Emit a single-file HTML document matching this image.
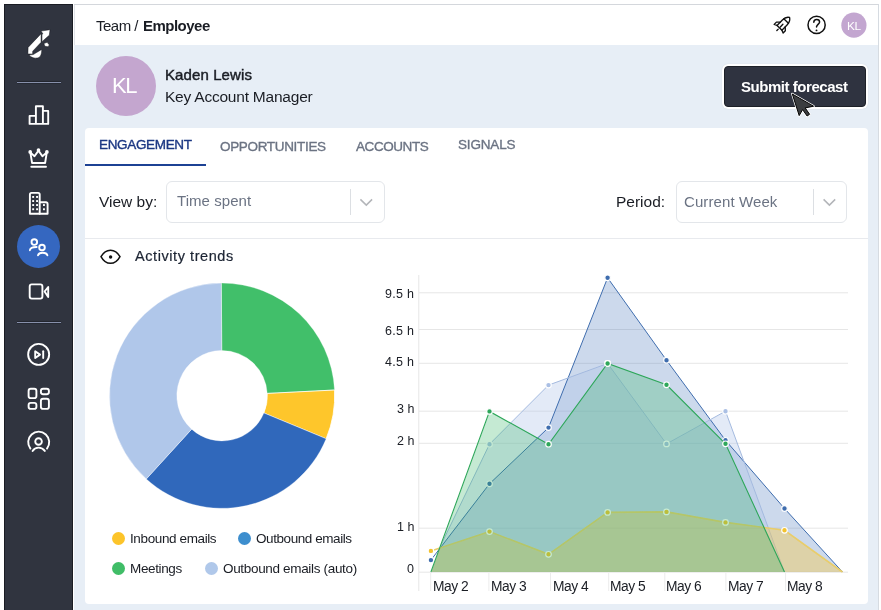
<!DOCTYPE html>
<html><head><meta charset="utf-8">
<style>
*{margin:0;padding:0;box-sizing:border-box}
html,body{width:881px;height:610px;overflow:hidden;background:#fff;font-family:"Liberation Sans",sans-serif}
.a{will-change:transform}
.a{position:absolute;white-space:nowrap;line-height:1}
#frame{position:absolute;left:4px;top:4px;width:875px;height:620px;background:#e7eef6;border-top:1px solid #d4d7dc;border-right:1px solid #d6dbe1}
#side{position:absolute;left:4px;top:4px;width:69px;height:620px;background:#30343f;border:1px solid #1a1c23;border-bottom:none;box-shadow:1px 0 0 #fff}
#hdr{position:absolute;left:74px;top:5px;width:804px;height:40px;background:#fff;border-left:1px solid #e1e4e9}
#card{position:absolute;left:85px;top:128px;width:783px;height:476px;background:#fff;border-radius:4px}
.sep{position:absolute;left:16.5px;width:44px;height:1px;background:#8790ab;box-shadow:0 -1px 0 #23262f,0 1px 0 #262a34}
.sel{position:absolute;border:1px solid #e3e6ea;border-radius:6px;background:#fff}
.sel .bar{position:absolute;top:6.7px;width:1px;height:26.7px;background:#dcdfe3}
</style></head><body>
<div id="frame"></div>
<div id="side"></div>
<div id="hdr"></div>


<!-- header -->
<div class="a" style="letter-spacing:-0.5px;left:95.5px;top:17.7px;font-size:15px;color:#1a1d24">Team / <b style="margin-left:1.2px">Employee</b></div>
<!-- profile -->
<div style="position:absolute;left:96px;top:56px;width:60px;height:60px;border-radius:50%;background:#c4a6cf"></div>
<div class="a" style="left:112.3px;top:75.2px;font-size:22px;letter-spacing:-1.4px;color:#fff">KL</div>
<div class="a" style="-webkit-text-stroke:0.45px #1a1d24;letter-spacing:0.1px;left:164.5px;top:67px;font-size:15px;color:#1a1d24">Kaden Lewis</div>
<div class="a" style="letter-spacing:-0.22px;left:164.5px;top:89px;font-size:15.5px;color:#1a1d24">Key Account Manager</div>
<!-- submit -->
<div style="position:absolute;left:722px;top:64px;width:145.5px;height:45px;border-radius:6px;background:#fff;box-shadow:0 0 1px #c9ced6"></div>
<div style="position:absolute;left:724px;top:66px;width:141.5px;height:41px;border-radius:4px;background:#2f3340;border:1px solid #1d2027"></div>
<div class="a" style="letter-spacing:-0.46px;left:740.5px;top:79.4px;font-size:15px;font-weight:bold;color:#fff">Submit forecast</div>
<!-- card -->
<div id="card"></div>
<div class="a" style="-webkit-text-stroke:0.35px currentColor;letter-spacing:-0.33px;left:99px;top:137.9px;font-size:13.5px;color:#1b3783">ENGAGEMENT</div>
<div class="a" style="-webkit-text-stroke:0.35px currentColor;letter-spacing:-0.33px;left:220px;top:139.9px;font-size:13.5px;color:#6b7383">OPPORTUNITIES</div>
<div class="a" style="-webkit-text-stroke:0.35px currentColor;letter-spacing:-0.43px;left:356px;top:139.6px;font-size:13.5px;color:#6b7383">ACCOUNTS</div>
<div class="a" style="-webkit-text-stroke:0.35px currentColor;letter-spacing:-0.17px;left:457.5px;top:137.9px;font-size:13.5px;color:#6b7383">SIGNALS</div>
<div style="position:absolute;left:85px;top:164.2px;width:120.5px;height:2.2px;background:#1c4194"></div>
<div style="position:absolute;left:85px;top:238px;width:783px;height:1px;background:#e8eaee"></div>
<div class="a" style="left:99px;top:194.3px;font-size:15.5px;color:#1a1d24">View by:</div>
<div class="sel" style="left:165.5px;top:181px;width:219px;height:41.5px"><div class="bar" style="left:183.5px"></div></div>
<div class="a" style="letter-spacing:0.06px;left:177.3px;top:193.3px;font-size:15px;color:#6b7383">Time spent</div>
<div class="a" style="left:616px;top:193.9px;font-size:15.5px;color:#1a1d24">Period:</div>
<div class="sel" style="left:675.5px;top:181px;width:171.3px;height:41.5px"><div class="bar" style="left:136.5px"></div></div>
<div class="a" style="letter-spacing:0.1px;left:684.2px;top:193.8px;font-size:15px;color:#6b7383">Current Week</div>
<div class="a" style="-webkit-text-stroke:0.2px currentColor;letter-spacing:0.57px;left:134.5px;top:248.6px;font-size:14.5px;color:#1c2433">Activity trends</div>
<!-- legend -->
<div class="a" style="letter-spacing:-0.38px;left:129.5px;top:531.9px;font-size:13.5px;color:#1a1d24">Inbound emails</div>
<div class="a" style="letter-spacing:-0.43px;left:255.5px;top:531.9px;font-size:13.5px;color:#1a1d24">Outbound emails</div>
<div class="a" style="letter-spacing:-0.37px;left:129.5px;top:562px;font-size:13.5px;color:#1a1d24">Meetings</div>
<div class="a" style="letter-spacing:-0.33px;left:222.5px;top:562px;font-size:13.5px;color:#1a1d24">Outbound emails (auto)</div>
<!-- y labels -->
<div class="a" style="letter-spacing:0.3px;right:466.7px;top:287.8px;font-size:12.5px;color:#1a1d24">9.5 h</div>
<div class="a" style="letter-spacing:0.3px;right:466.7px;top:324.6px;font-size:12.5px;color:#1a1d24">6.5 h</div>
<div class="a" style="letter-spacing:0.3px;right:466.7px;top:355.8px;font-size:12.5px;color:#1a1d24">4.5 h</div>
<div class="a" style="right:466.7px;top:403px;font-size:12.5px;color:#1a1d24">3 h</div>
<div class="a" style="right:466.7px;top:435px;font-size:12.5px;color:#1a1d24">2 h</div>
<div class="a" style="right:466.7px;top:521.3px;font-size:12.5px;color:#1a1d24">1 h</div>
<div class="a" style="right:466.7px;top:563.4px;font-size:12.5px;color:#1a1d24">0</div>
<!-- x labels -->
<div class="a" style="left:433px;top:579.6px;font-size:13.8px;letter-spacing:-0.5px;color:#1a1d24">May 2</div>
<div class="a" style="left:491px;top:579.6px;font-size:13.8px;letter-spacing:-0.5px;color:#1a1d24">May 3</div>
<div class="a" style="left:552.5px;top:579.6px;font-size:13.8px;letter-spacing:-0.5px;color:#1a1d24">May 4</div>
<div class="a" style="left:610.4px;top:579.6px;font-size:13.8px;letter-spacing:-0.5px;color:#1a1d24">May 5</div>
<div class="a" style="left:665.7px;top:579.6px;font-size:13.8px;letter-spacing:-0.5px;color:#1a1d24">May 6</div>
<div class="a" style="left:727.5px;top:579.6px;font-size:13.8px;letter-spacing:-0.5px;color:#1a1d24">May 7</div>
<div class="a" style="left:786.5px;top:579.6px;font-size:13.8px;letter-spacing:-0.5px;color:#1a1d24">May 8</div>


<!--CHART START-->
<svg class="a" style="left:0;top:0" width="881" height="610" viewBox="0 0 881 610">
 <path d="M221.31 283.10A112.6 112.6 0 0 1 334.56 390.00L267.24 393.41A45.2 45.2 0 0 0 221.78 350.50Z" fill="#41bf6a" stroke="#fff" stroke-width="0.3"/>
 <path d="M334.56 390.00A112.6 112.6 0 0 1 326.13 438.79L263.86 413.00A45.2 45.2 0 0 0 267.24 393.41Z" fill="#fec62b" stroke="#fff" stroke-width="0.8"/>
 <path d="M326.13 438.79A112.6 112.6 0 0 1 146.32 478.98L191.68 429.13A45.2 45.2 0 0 0 263.86 413.00Z" fill="#3068bb" stroke="#fff" stroke-width="0.3"/>
 <path d="M146.32 478.98A112.6 112.6 0 0 1 221.31 283.10L221.78 350.50A45.2 45.2 0 0 0 191.68 429.13Z" fill="#b0c7ea" stroke="#fff" stroke-width="0.4"/>
 <g stroke="#e6e6e6" stroke-width="1" fill="none"><line x1="419" y1="292.8" x2="848" y2="292.8"/><line x1="419" y1="329.5" x2="848" y2="329.5"/><line x1="419" y1="363.3" x2="848" y2="363.3"/><line x1="419" y1="411.2" x2="848" y2="411.2"/><line x1="419" y1="443.3" x2="848" y2="443.3"/><line x1="419" y1="528.2" x2="848" y2="528.2"/><line x1="419" y1="572.2" x2="848" y2="572.2"/><line x1="418.8" y1="275" x2="418.8" y2="591"/></g>
 <g stroke="#ececec" stroke-width="1"><line x1="430.7" y1="573" x2="430.7" y2="591"/><line x1="488.9" y1="573" x2="488.9" y2="591"/><line x1="550.5" y1="573" x2="550.5" y2="591"/><line x1="608.7" y1="573" x2="608.7" y2="591"/><line x1="664.8" y1="573" x2="664.8" y2="591"/><line x1="725.9" y1="573" x2="725.9" y2="591"/><line x1="785.6" y1="573" x2="785.6" y2="591"/></g>
 <defs><clipPath id="cl"><polygon points="430.9,573 541.3,270 870,270 870,573"/></clipPath></defs>
 <g clip-path="url(#cl)">
  <polygon points="430.9,572 430.9,560.1 489.5,483.8 548.5,427.6 607.6,277.8 666.5,360.2 725.5,440.3 784.5,508.5 842.5,572.0 842.5,572" fill="#3b6db4" fill-opacity="0.26"/>
  <polygon points="430.9,572 430.9,566.0 489.5,444.2 548.5,385.1 607.6,363.5 666.5,443.9 725.5,411.2 784.5,572.0 784.5,572" fill="#a8bfe6" fill-opacity="0.32"/>
 </g>
 <polyline points="430.9,560.1 489.5,483.8 548.5,427.6 607.6,277.8 666.5,360.2 725.5,440.3 784.5,508.5 842.5,572.0" fill="none" stroke="#3f6dae" stroke-width="1.0"/>
 <polyline clip-path="url(#cl)" points="430.9,566.0 489.5,444.2 548.5,385.1 607.6,363.5 666.5,443.9 725.5,411.2 784.5,572.0" fill="none" stroke="#a4badf" stroke-width="1.0"/>
 <circle cx="430.9" cy="560.1" r="2.8" fill="#3f6dae" stroke="#fff" stroke-width="1.2"/><circle cx="489.5" cy="483.8" r="2.8" fill="#3f6dae" stroke="#fff" stroke-width="1.2"/><circle cx="548.5" cy="427.6" r="2.8" fill="#3f6dae" stroke="#fff" stroke-width="1.2"/><circle cx="607.6" cy="277.8" r="2.8" fill="#3f6dae" stroke="#fff" stroke-width="1.2"/><circle cx="666.5" cy="360.2" r="2.8" fill="#3f6dae" stroke="#fff" stroke-width="1.2"/><circle cx="725.5" cy="440.3" r="2.8" fill="#3f6dae" stroke="#fff" stroke-width="1.2"/><circle cx="784.5" cy="508.5" r="2.8" fill="#3f6dae" stroke="#fff" stroke-width="1.2"/>
 <circle cx="489.5" cy="444.2" r="2.8" fill="#aabfe4" stroke="#fff" stroke-width="1.2"/><circle cx="548.5" cy="385.1" r="2.8" fill="#aabfe4" stroke="#fff" stroke-width="1.2"/><circle cx="607.6" cy="363.5" r="2.8" fill="#aabfe4" stroke="#fff" stroke-width="1.2"/><circle cx="666.5" cy="443.9" r="2.8" fill="#aabfe4" stroke="#fff" stroke-width="1.2"/><circle cx="725.5" cy="411.2" r="2.8" fill="#aabfe4" stroke="#fff" stroke-width="1.2"/>
 <g clip-path="url(#cl)">
  <polygon points="430.9,572 430.9,550.9 489.5,531.6 548.5,554.3 607.6,512.4 666.5,511.9 725.5,522.4 784.5,530.3 842.5,572.0 842.5,572" fill="#fec62b" fill-opacity="0.35"/>
 </g>
 <polyline points="430.9,550.9 489.5,531.6 548.5,554.3 607.6,512.4 666.5,511.9 725.5,522.4 784.5,530.3 842.5,572.0" fill="none" stroke="#e9cd6a" stroke-width="1.6"/>
 <circle cx="430.9" cy="550.9" r="2.8" fill="#f2c22e" stroke="#fff" stroke-width="1.2"/><circle cx="489.5" cy="531.6" r="2.8" fill="#f2c22e" stroke="#fff" stroke-width="1.2"/><circle cx="548.5" cy="554.3" r="2.8" fill="#f2c22e" stroke="#fff" stroke-width="1.2"/><circle cx="607.6" cy="512.4" r="2.8" fill="#f2c22e" stroke="#fff" stroke-width="1.2"/><circle cx="666.5" cy="511.9" r="2.8" fill="#f2c22e" stroke="#fff" stroke-width="1.2"/><circle cx="725.5" cy="522.4" r="2.8" fill="#f2c22e" stroke="#fff" stroke-width="1.2"/><circle cx="784.5" cy="530.3" r="2.8" fill="#f2c22e" stroke="#fff" stroke-width="1.2"/>
 <g clip-path="url(#cl)">
  <polygon points="430.9,572 430.9,572.0 489.5,411.4 548.5,444.2 607.6,363.5 666.5,384.8 725.5,443.8 784.5,572.0 784.5,572" fill="#2fb462" fill-opacity="0.28"/>
 </g>
 <polyline points="430.9,572.0 489.5,411.4 548.5,444.2 607.6,363.5 666.5,384.8 725.5,443.8 784.5,572.0" fill="none" stroke="#2ea75a" stroke-width="1.1"/>
 <circle cx="489.5" cy="411.4" r="2.8" fill="#2ea75a" stroke="#fff" stroke-width="1.2"/><circle cx="548.5" cy="444.2" r="2.8" fill="#2ea75a" stroke="#fff" stroke-width="1.2"/><circle cx="607.6" cy="363.5" r="2.8" fill="#2ea75a" stroke="#fff" stroke-width="1.2"/><circle cx="666.5" cy="384.8" r="2.8" fill="#2ea75a" stroke="#fff" stroke-width="1.2"/><circle cx="725.5" cy="443.8" r="2.8" fill="#2ea75a" stroke="#fff" stroke-width="1.2"/>
</svg>
<!--CHART END-->
<!-- legend dots -->
<div style="position:absolute;left:111.8px;top:531.8px;width:13px;height:13px;border-radius:50%;background:#fcc42a"></div>
<div style="position:absolute;left:238.1px;top:531.8px;width:13px;height:13px;border-radius:50%;background:#3d8ece"></div>
<div style="position:absolute;left:111.8px;top:562.2px;width:13px;height:13px;border-radius:50%;background:#40bd67"></div>
<div style="position:absolute;left:205.3px;top:562.2px;width:13px;height:13px;border-radius:50%;background:#b0c8ea"></div>


<!-- header icons -->
<svg class="a" style="left:0;top:0" width="881" height="60" viewBox="0 0 881 60">
 <g transform="translate(783.1 24.1) rotate(44)" fill="none" stroke="#111" stroke-width="1.35" stroke-linejoin="round" stroke-linecap="round">
  <path d="M0 -9.3 C2.6 -7.8 3.4 -5.4 3.4 -2.5 L3.4 5.2 L-3.4 5.2 L-3.4 -2.5 C-3.4 -5.4 -2.6 -7.8 0 -9.3 Z"/>
  <path d="M-3.2 -4.3 L3.2 -4.3"/>
  <path d="M-3.4 0.5 L-6.2 3.2 L-6.2 6.4 L-3.4 5.2"/>
  <path d="M3.4 0.5 L6.2 3.2 L6.2 6.4 L3.4 5.2"/>
  <path d="M0 0.3 L0 4"/>
  <path d="M0 7 L0 9"/>
 </g>
 <g fill="none" stroke="#111" stroke-width="1.5" stroke-linecap="round">
  <circle cx="816.6" cy="24.9" r="8.6"/>
  <path d="M813.8 22.3 C813.8 20.3 815.1 19.4 816.7 19.4 C818.4 19.4 819.6 20.5 819.6 22 C819.6 23.9 816.8 24.3 816.5 26.9"/>
 </g>
 <circle cx="816.5" cy="30.4" r="0.95" fill="#111"/>
 <circle cx="853.9" cy="25.2" r="12.6" fill="#c3a6d0"/>
</svg>
<div class="a" style="left:847px;top:20.7px;font-size:11.8px;color:#fff;letter-spacing:-0.4px">KL</div>


<!-- eye, chevrons -->
<svg class="a" style="left:0;top:0" width="881" height="610" viewBox="0 0 881 610">
 <path d="M101 256.6 C104 251.3 107 250.2 110.5 250.2 C114 250.2 117 251.3 120 256.6 C117 262.2 114 263.3 110.5 263.3 C107 263.3 104 262.2 101 256.6Z" fill="none" stroke="#111" stroke-width="1.5"/>
 <circle cx="110.6" cy="257" r="1.7" fill="#111"/>
 <path d="M360.4 199.4 L366.3 205.1 L372.1 199.4" fill="none" stroke="#b3b5b9" stroke-width="1.5"/>
 <path d="M823.6 199.4 L829.4 205.1 L835.2 199.4" fill="none" stroke="#b3b5b9" stroke-width="1.5"/>
</svg>
<!-- cursor -->
<svg class="a" style="left:0;top:0" width="881" height="610" viewBox="0 0 881 610">
 <path d="M792.3 94 L813.6 106.2 L805.2 107.9 L809.6 114.3 L807.1 116 L802.6 109.6 L799.2 115.6 Z" fill="#3b3d40" stroke="#fff" stroke-width="2.4" stroke-linejoin="round"/>
 <path d="M792.3 94 L813.6 106.2 L805.2 107.9 L809.6 114.3 L807.1 116 L802.6 109.6 L799.2 115.6 Z" fill="#3b3d40" stroke="#000" stroke-width="1" stroke-linejoin="round"/>
</svg>

<!-- sidebar separators -->
<div class="sep" style="top:82px"></div>
<div class="sep" style="top:322px"></div>
<div style="position:absolute;left:17px;top:225px;width:43px;height:43px;border-radius:50%;background:#3567c0"></div>

<svg class="a" style="left:0;top:0" width="881" height="610" viewBox="0 0 881 610">
 <g fill="none" stroke="#fff" stroke-width="1.9" stroke-linejoin="round" stroke-linecap="round">
  <!-- bar chart -->
  <path d="M29.6 115.9h6.3v8h-6.3z M35.9 106.2h7v17.7h-7z M42.9 110.9h5.3v13h-5.3z"/>
  <!-- crown -->
  <path d="M30.3 152.4 L34.5 156.2 L38.5 150.6 L42.4 156.2 L46.8 152.4 L45.1 163 H32.1 Z"/>
  <path d="M31.3 166.8 H46"/>
  <circle cx="30.2" cy="151.9" r="0.9"/><circle cx="38.5" cy="150" r="0.9"/><circle cx="46.9" cy="151.9" r="0.9"/>
  <!-- building -->
  <path d="M31.5 192.9h6.6a1.6 1.6 0 0 1 1.6 1.6v19.3h-9.8v-19.3a1.6 1.6 0 0 1 1.6-1.6z"/>
  <path d="M39.7 202.3h6.3a1.6 1.6 0 0 1 1.6 1.6v9.9h-7.9"/>
  <!-- people -->
  <circle cx="34.3" cy="242.1" r="2.8"/>
  <path d="M29.9 250.2 C30.3 247.8 32 247 36.6 247"/>
  <circle cx="42" cy="247.5" r="2.8"/>
  <path d="M38 255.3 C38.6 253.4 40.4 252.8 42.7 252.8 C45 252.8 46.8 253.4 47.4 255.3"/>
  <!-- video -->
  <rect x="29.7" y="284.4" width="12.7" height="14.2" rx="2"/>
  <path d="M44.6 291.5 L48.2 287 V297 Z"/>
  <!-- play circle -->
  <circle cx="38.65" cy="354.4" r="10.5"/>
  <path d="M35.2 351.2 V358 L40 354.6 Z"/>
  <path d="M43.2 351.2 V358"/>
  <!-- grid -->
  <rect x="28.6" y="388.8" width="7.8" height="9.3" rx="2.2"/>
  <rect x="40.9" y="388.8" width="8" height="5.4" rx="2.2"/>
  <rect x="28.6" y="402.9" width="7.8" height="6" rx="2.2"/>
  <rect x="40.9" y="398.7" width="8" height="10.2" rx="2.2"/>
  <!-- user circle -->
  <path d="M30.4 448.6 A10.5 10.5 0 1 1 47 448.6"/>
  <circle cx="38.55" cy="441.5" r="3.3"/>
  <path d="M32.6 450.9 C34 448.7 36 447.6 38.6 447.6 C41.2 447.6 43.2 448.7 44.8 450.9"/>
 </g>
 <!-- building windows -->
 <g fill="#fff">
  <rect x="32.2" y="196" width="1.9" height="1.9"/><rect x="36.1" y="196" width="1.9" height="1.9"/>
  <rect x="32.2" y="200.1" width="1.9" height="1.9"/><rect x="36.1" y="200.1" width="1.9" height="1.9"/>
  <rect x="32.2" y="204.1" width="1.9" height="1.9"/><rect x="36.1" y="204.1" width="1.9" height="1.9"/>
  <rect x="32.2" y="208.3" width="1.9" height="1.9"/><rect x="36.1" y="208.3" width="1.9" height="1.9"/>
  <rect x="43" y="204.1" width="1.9" height="1.9"/><rect x="43" y="208.3" width="1.9" height="1.9"/>
 </g>
 <!-- logo -->
 <g fill="#fff" stroke="#0d0f14" stroke-width="0.45" stroke-linejoin="round">
  <path d="M50 29.7 L41 31.1 L42.9 33.7 L42 34.4 L42 41.7 L46.9 37.3 L49.3 35.2 Z"/>
  <path d="M41.1 33.7 L28.1 47.4 L27.9 54 L32.6 54 L32.7 51.2 L41.1 42.3 Z"/>
  <path d="M29.2 55 C31 57.6 34.5 58.5 37.3 58 C40.4 57.2 41.8 54.6 41.7 49.4 L33.2 54.6 Z"/>
  <path d="M43.9 43.6 L47.1 42.3 L49.3 44.9 L48 46.8 L44.9 46.3 Z"/>
 </g>
</svg>

</body></html>
